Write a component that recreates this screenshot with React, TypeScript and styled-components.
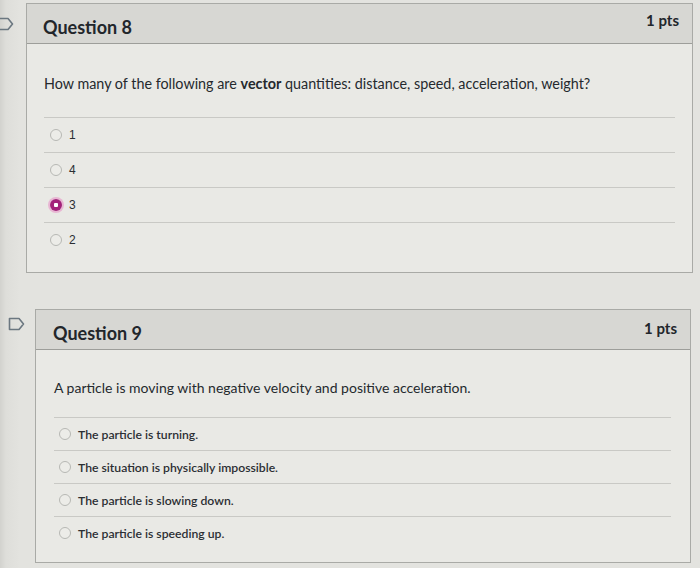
import React from "react";
import styled, { createGlobalStyle } from "styled-components";

const GlobalStyle = createGlobalStyle`
  html, body {
    margin: 0;
    padding: 0;
    background: #e3e3df;
    font-family: Lato, "Open Sans", sans-serif;
    color: #2d3035;
  }
`;

interface IAnswer {
  label: string;
  selected?: boolean;
}

interface IQuestion {
  number: number;
  points: string;
  text: React.ReactNode;
  answers: IAnswer[];
  compact?: boolean;
}

const QUESTIONS: IQuestion[] = [
  {
    number: 8,
    points: "1 pts",
    text: (
      <>
        How many of the following are <b>vector</b> quantities: distance, speed, acceleration, weight?
      </>
    ),
    answers: [{ label: "1" }, { label: "4" }, { label: "3", selected: true }, { label: "2" }]
  },
  {
    number: 9,
    points: "1 pts",
    compact: true,
    text: "A particle is moving with negative velocity and positive acceleration.",
    answers: [
      { label: "The particle is turning." },
      { label: "The situation is physically impossible." },
      { label: "The particle is slowing down." },
      { label: "The particle is speeding up." }
    ]
  }
];

const FlagIcon = () => (
  <svg width="17" height="14" viewBox="0 0 17 14">
    <path d="M1.5 1.5 H11 L15.5 7 L11 12.5 H1.5 Z" fill="none" stroke="#6b7780" strokeWidth="1.6" strokeLinejoin="round" />
  </svg>
);

const App = () => {
  return (
    <>
      <GlobalStyle />
      <Page>
        {QUESTIONS.map((q) => (
          <Row key={q.number} $compact={q.compact}>
            <FlagSlot $compact={q.compact}>
              <FlagIcon />
            </FlagSlot>
            <Panel>
              <Header $compact={q.compact}>
                <Title>Question {q.number}</Title>
                <Points $compact={q.compact}>{q.points}</Points>
              </Header>
              <Body $compact={q.compact}>
                <QuestionText $compact={q.compact}>{q.text}</QuestionText>
                <AnswerList>
                  {q.answers.map((a) => (
                    <Answer key={a.label} $compact={q.compact}>
                      <Radio $selected={a.selected} />
                      <AnswerLabel $compact={q.compact}>{a.label}</AnswerLabel>
                    </Answer>
                  ))}
                </AnswerList>
              </Body>
            </Panel>
          </Row>
        ))}
      </Page>
    </>
  );
};

const Page = styled.div`
  width: 700px;
  height: 568px;
  overflow: hidden;
  padding-top: 3px;
  box-sizing: border-box;
  display: flex;
  flex-direction: column;
  gap: 36px;
  background: linear-gradient(90deg, #d2d2ce 0, #dededa 6px, #e3e3df 20px);
`;

const Row = styled.section<{ $compact?: boolean }>`
  display: flex;
  align-items: flex-start;
  padding-right: ${(p) => (p.$compact ? "9px" : "7px")};
`;

const FlagSlot = styled.div<{ $compact?: boolean }>`
  width: ${(p) => (p.$compact ? "35px" : "26px")};
  flex-shrink: 0;
  display: flex;
  padding-top: ${(p) => (p.$compact ? "8px" : "14px")};
  padding-left: ${(p) => (p.$compact ? "8px" : "0")};
  box-sizing: border-box;
  & > svg {
    margin-left: ${(p) => (p.$compact ? "0" : "-3px")};
  }
`;

const Panel = styled.article`
  flex: 1;
  border: 1px solid #a9aaa6;
  background: #e9e9e5;
`;

const Header = styled.header<{ $compact?: boolean }>`
  height: 39px;
  background: #d7d7d3;
  border-bottom: 1px solid #9d9e9a;
  display: flex;
  align-items: center;
  justify-content: space-between;
  padding: 0 13px 0 ${(p) => (p.$compact ? "17px" : "16px")};
`;

const Title = styled.h2`
  margin: 0;
  font-size: 18px;
  font-weight: 700;
  color: #22262b;
  padding-top: 6px;
`;

const Points = styled.span<{ $compact?: boolean }>`
  font-size: 15px;
  font-weight: 700;
  color: #22262b;
  margin-bottom: ${(p) => (p.$compact ? "4px" : "8px")};
`;

const Body = styled.div<{ $compact?: boolean }>`
  padding: ${(p) => (p.$compact ? "28px 19px 13px 18px" : "30px 17px 15px 17px")};
`;

const QuestionText = styled.p<{ $compact?: boolean }>`
  margin: 0 0 ${(p) => (p.$compact ? "19px" : "23px")};
  font-size: ${(p) => (p.$compact ? "14px" : "14.35px")};
  line-height: 20px;
  color: #25292e;
  b {
    font-weight: 700;
  }
`;

const AnswerList = styled.div`
  display: flex;
  flex-direction: column;
`;

const Answer = styled.div<{ $compact?: boolean }>`
  height: ${(p) => (p.$compact ? "32px" : "34px")};
  border-top: 1px solid #c9c9c5;
  display: flex;
  align-items: center;
  gap: 7px;
  padding-left: ${(p) => (p.$compact ? "5px" : "6px")};
`;

const Radio = styled.span<{ $selected?: boolean }>`
  width: 12px;
  height: 12px;
  border-radius: 50%;
  box-sizing: border-box;
  flex-shrink: 0;
  ${(p) =>
    p.$selected
      ? `
    background: radial-gradient(circle, #ffffff 0 2px, #a3217a 2.5px);
    box-shadow: 0 0 0 2px #e8b6d3;
  `
      : `
    background: #ecece8;
    border: 1px solid #b7b8b4;
  `}
`;

const AnswerLabel = styled.span<{ $compact?: boolean }>`
  font-family: ${(p) => (p.$compact ? "Lato" : `"Liberation Sans"`)}, sans-serif;
  font-size: ${(p) => (p.$compact ? "12.2px" : "12px")};
  font-weight: ${(p) => (p.$compact ? 600 : 400)};
  color: #2b2e33;
`;

export default App;
